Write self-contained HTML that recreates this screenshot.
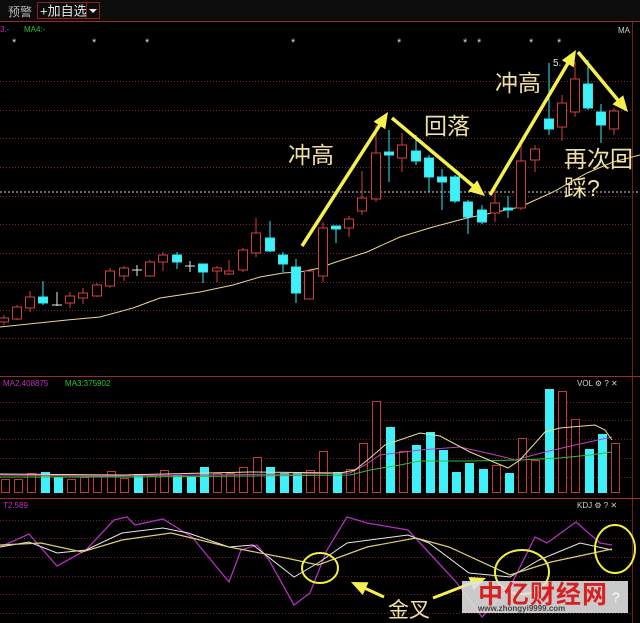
<!DOCTYPE html>
<html><head><meta charset="utf-8"><style>
html,body{margin:0;padding:0;background:#000;width:640px;height:623px;overflow:hidden}
svg{display:block}
.t{font-family:"Liberation Sans","Noto Sans CJK SC",sans-serif}
</style></head><body>
<svg width="640" height="623" viewBox="0 0 640 623" xmlns="http://www.w3.org/2000/svg">
<rect width="640" height="623" fill="#000"/>
<rect x="0" y="0" width="640" height="21" fill="#0c0c0c"/>
<text x="8" y="16" class="t" font-size="12" fill="#b8b8b8">预警</text>
<rect x="37.5" y="2.5" width="49" height="16" fill="none" stroke="#8a2020"/>
<text x="40" y="15.5" class="t" font-size="13" fill="#e8e8e8">+加自选</text>
<rect x="86.5" y="2.5" width="13" height="16" fill="none" stroke="#8a2020"/>
<polygon points="89,9 97,9 93,13" fill="#e8e8e8"/>
<line x1="0" y1="21.5" x2="640" y2="21.5" stroke="#9a2a2a"/>
<text x="0" y="32" class="t" font-size="8" fill="#c030c0">3:-</text>
<text x="24" y="32" class="t" font-size="8" fill="#30c030">MA4:-</text>
<text x="618" y="33" class="t" font-size="8" fill="#d0d0d0">MA</text>
<g class="t" font-size="11" fill="#d8d8d8">
<text x="12" y="46">*</text><text x="92" y="46">*</text><text x="145" y="46">*</text><text x="291" y="46">*</text><text x="397" y="46">*</text><text x="463" y="46">*</text><text x="477" y="46">*</text><text x="529" y="46">*</text><text x="557" y="46">*</text>
</g>
<g stroke="#7a2a2a" stroke-dasharray="1,2">
<line x1="0" y1="81.5" x2="632" y2="81.5"/><line x1="0" y1="110.5" x2="632" y2="110.5"/><line x1="0" y1="138.5" x2="632" y2="138.5"/><line x1="0" y1="167.5" x2="632" y2="167.5"/><line x1="0" y1="196.5" x2="632" y2="196.5"/><line x1="0" y1="224.5" x2="632" y2="224.5"/><line x1="0" y1="253.5" x2="632" y2="253.5"/><line x1="0" y1="282.5" x2="632" y2="282.5"/><line x1="0" y1="310.5" x2="632" y2="310.5"/><line x1="0" y1="338.5" x2="632" y2="338.5"/>
</g>
<line x1="0" y1="192" x2="640" y2="192" stroke="#d8d8d8" stroke-dasharray="2,2"/>
<line x1="632.5" y1="22" x2="632.5" y2="623" stroke="#7a2020"/>
<polyline fill="none" stroke="#e8d890" stroke-width="1" points="0,327 67,320 100,317 133,308 160,298 200,292 233,285 260,277 283,273 300,272 320,268 333,263 367,252 400,237 433,227 467,218 487,214 520,207 553,192 587,173 613,162 640,155"/>
<g stroke-width="1">
<g stroke="#d04040" fill="#000">
<line x1="4" y1="315" x2="4" y2="325"/><rect x="-0.5" y="318" width="9" height="4"/>
<line x1="17" y1="305" x2="17" y2="320"/><rect x="12.5" y="307" width="9" height="12"/>
<line x1="30" y1="291" x2="30" y2="312"/><rect x="25.5" y="297" width="9" height="11"/>
<line x1="70" y1="292" x2="70" y2="308"/><rect x="65.5" y="296" width="9" height="7"/>
<line x1="83" y1="288" x2="83" y2="304"/><rect x="78.5" y="293" width="9" height="5"/>
<line x1="97" y1="283" x2="97" y2="297"/><rect x="92.5" y="285" width="9" height="11"/>
<line x1="110" y1="268" x2="110" y2="288"/><rect x="105.5" y="271" width="9" height="15"/>
<line x1="124" y1="266" x2="124" y2="281"/><rect x="119.5" y="268" width="9" height="8"/>
<line x1="150" y1="260" x2="150" y2="277"/><rect x="145.5" y="262" width="9" height="14"/>
<line x1="163" y1="252" x2="163" y2="271"/><rect x="158.5" y="255" width="9" height="7"/>
<line x1="217" y1="266" x2="217" y2="282"/><rect x="212.5" y="268" width="9" height="3"/>
<line x1="229" y1="260" x2="229" y2="275"/><rect x="224.5" y="271" width="9" height="3"/>
<line x1="243" y1="248" x2="243" y2="272"/><rect x="238.5" y="250" width="9" height="20"/>
<line x1="256" y1="218" x2="256" y2="257"/><rect x="251.5" y="233" width="9" height="20"/>
<rect x="304.5" y="271" width="9" height="28"/>
<line x1="323" y1="222" x2="323" y2="282"/><rect x="318.5" y="228" width="9" height="48"/>
<line x1="349" y1="216" x2="349" y2="237"/><rect x="344.5" y="219" width="9" height="9"/>
<line x1="362" y1="171" x2="362" y2="215"/><rect x="357.5" y="198" width="9" height="13"/>
<line x1="376" y1="125" x2="376" y2="202"/><rect x="371.5" y="153" width="9" height="46"/>
<line x1="402" y1="133" x2="402" y2="172"/><rect x="397.5" y="145" width="9" height="13"/>
<line x1="495" y1="186" x2="495" y2="222"/><rect x="490.5" y="203" width="9" height="10"/>
<line x1="521" y1="140" x2="521" y2="210"/><rect x="516.5" y="161" width="9" height="47"/>
<line x1="535" y1="145" x2="535" y2="172"/><rect x="530.5" y="149" width="9" height="11"/>
<line x1="562" y1="95" x2="562" y2="141"/><rect x="557.5" y="103" width="9" height="24"/>
<line x1="575" y1="62" x2="575" y2="117"/><rect x="570.5" y="79" width="9" height="33"/>
<line x1="614" y1="108" x2="614" y2="135"/><rect x="609.5" y="111" width="9" height="18"/>
</g>
<g stroke="#30e8f0" fill="#40f0f8">
<line x1="43" y1="281" x2="43" y2="305"/><rect x="38.5" y="297" width="9" height="6"/>
<line x1="177" y1="252" x2="177" y2="269"/><rect x="172.5" y="255" width="9" height="7"/>
<line x1="203" y1="264" x2="203" y2="283"/><rect x="198.5" y="264" width="9" height="8"/>
<line x1="270" y1="221" x2="270" y2="252"/><rect x="265.5" y="238" width="9" height="13"/>
<line x1="283" y1="252" x2="283" y2="272"/><rect x="278.5" y="255" width="9" height="9"/>
<line x1="296" y1="259" x2="296" y2="303"/><rect x="291.5" y="267" width="9" height="26"/>
<line x1="336" y1="226" x2="336" y2="243"/><rect x="331.5" y="226" width="9" height="3"/>
<line x1="389" y1="130" x2="389" y2="182"/><rect x="384.5" y="152" width="9" height="3"/>
<line x1="416" y1="135" x2="416" y2="165"/><rect x="411.5" y="151" width="9" height="10"/>
<line x1="429" y1="155" x2="429" y2="192"/><rect x="424.5" y="158" width="9" height="19"/>
<line x1="442" y1="169" x2="442" y2="210"/><rect x="437.5" y="177" width="9" height="5"/>
<line x1="455" y1="175" x2="455" y2="203"/><rect x="450.5" y="177" width="9" height="24"/>
<line x1="468" y1="200" x2="468" y2="234"/><rect x="463.5" y="202" width="9" height="15"/>
<line x1="482" y1="205" x2="482" y2="224"/><rect x="477.5" y="210" width="9" height="12"/>
<line x1="508" y1="196" x2="508" y2="218"/><rect x="503.5" y="208" width="9" height="2"/>
<line x1="549" y1="63" x2="549" y2="135"/><rect x="544.5" y="119" width="9" height="10"/>
<line x1="588" y1="60" x2="588" y2="110"/><rect x="583.5" y="84" width="9" height="24"/>
<line x1="601" y1="104" x2="601" y2="143"/><rect x="596.5" y="112" width="9" height="13"/>
</g>
<g stroke="#e8e8e8">
<line x1="57" y1="292" x2="57" y2="306"/><line x1="52" y1="305" x2="62" y2="305"/>
<line x1="137" y1="265" x2="137" y2="276"/><line x1="132" y1="270" x2="142" y2="270"/>
<line x1="190" y1="261" x2="190" y2="272"/><line x1="185" y1="266" x2="195" y2="266"/>
</g>
</g>
<g stroke="#f4f050" stroke-width="3.5" fill="#f4f050">
<line x1="302" y1="246" x2="383" y2="120"/><polygon points="388,112 385.3,129.2 373.5,121.6" stroke="none"/>
<line x1="392" y1="118" x2="478" y2="190"/><polygon points="485,196 468.2,191.2 477.2,180.4" stroke="none"/>
<line x1="490" y1="195" x2="571" y2="58"/><polygon points="576,50 573.8,67.4 561.8,60.2" stroke="none"/>
<line x1="578" y1="52" x2="622" y2="105"/><polygon points="628,112 612.4,104.2 623.2,95.2" stroke="none"/>
</g>
<text x="553" y="66" class="t" font-size="10" fill="#e0e0e0">5.</text>
<g class="t" font-size="23" fill="#f0e0a0">
<text x="288" y="163">冲高</text>
<text x="424" y="134">回落</text>
<text x="495" y="91">冲高</text>
<text x="564" y="167">再次回</text>
<text x="564" y="196">踩?</text>
</g>
<line x1="0" y1="376.5" x2="640" y2="376.5" stroke="#a02a2a"/>
<text x="3" y="386" class="t" font-size="8" fill="#c030c0">MA2.408875</text>
<text x="65" y="386" class="t" font-size="8" fill="#30c030">MA3:375902</text>
<text x="577" y="386" class="t" font-size="8" fill="#d0d0d0">VOL ⚙ ? ✕</text>
<g stroke="#6a2424" stroke-dasharray="1,2">
<line x1="0" y1="402.5" x2="632" y2="402.5"/><line x1="0" y1="420.5" x2="632" y2="420.5"/><line x1="0" y1="439.5" x2="632" y2="439.5"/><line x1="0" y1="458.5" x2="632" y2="458.5"/><line x1="0" y1="477.5" x2="632" y2="477.5"/>
</g>
<g stroke="#c83838" fill="#000">
<rect x="1.5" y="479.5" width="8" height="13"/><rect x="14.5" y="479.5" width="8" height="13"/><rect x="27.5" y="473.5" width="8" height="19"/><rect x="67.5" y="479.5" width="8" height="13"/><rect x="80.5" y="477.5" width="8" height="15"/><rect x="93.5" y="476.5" width="8" height="16"/><rect x="107.5" y="471.5" width="8" height="21"/><rect x="120.5" y="478.5" width="8" height="14"/><rect x="147.5" y="476.5" width="8" height="16"/><rect x="160.5" y="470.5" width="8" height="22"/><rect x="213.5" y="473.5" width="8" height="19"/><rect x="226.5" y="473.5" width="8" height="19"/><rect x="239.5" y="467.5" width="8" height="25"/><rect x="253.5" y="457.5" width="8" height="35"/><rect x="306.5" y="470.5" width="8" height="22"/><rect x="319.5" y="451.5" width="8" height="41"/><rect x="346.5" y="469.5" width="8" height="23"/><rect x="359.5" y="443.5" width="8" height="49"/><rect x="372.5" y="401.5" width="8" height="91"/><rect x="399.5" y="451.5" width="8" height="41"/><rect x="492.5" y="465.5" width="8" height="27"/><rect x="518.5" y="438.5" width="8" height="54"/><rect x="531.5" y="460.5" width="8" height="32"/><rect x="558.5" y="391.5" width="8" height="101"/><rect x="571.5" y="419.5" width="8" height="73"/><rect x="611.5" y="443.5" width="8" height="49"/>
</g>
<g fill="#40f0f8">
<rect x="41" y="472" width="9" height="21"/><rect x="54" y="477" width="9" height="16"/><rect x="134" y="474" width="9" height="19"/><rect x="173" y="475" width="9" height="18"/><rect x="187" y="477" width="9" height="16"/><rect x="200" y="467" width="9" height="26"/><rect x="266" y="467" width="9" height="26"/><rect x="280" y="473" width="9" height="20"/><rect x="293" y="473" width="9" height="20"/><rect x="333" y="472" width="9" height="21"/><rect x="386" y="427" width="9" height="66"/><rect x="412" y="445" width="9" height="48"/><rect x="426" y="432" width="9" height="61"/><rect x="439" y="450" width="9" height="43"/><rect x="452" y="472" width="9" height="21"/><rect x="465" y="463" width="9" height="30"/><rect x="479" y="469" width="9" height="24"/><rect x="505" y="473" width="9" height="20"/><rect x="545" y="389" width="9" height="104"/><rect x="598" y="434" width="9" height="59"/><rect x="585" y="449" width="9" height="44"/>
</g>
<polyline fill="none" stroke="#c040c0" points="0,475 100,476 200,475 300,474 350,473 365,465 380,455 420,450 460,447 500,456 515,460 545,452 575,445 612,437"/>
<polyline fill="none" stroke="#30c030" points="0,477 120,477 250,476 350,475 370,470 400,465 420,461 470,461 520,460 560,458 590,455 612,452"/>
<polyline fill="none" stroke="#e8e090" points="0,474 120,475 250,472 340,473 355,470 370,458 385,445 420,433 440,436 470,452 508,468 520,460 545,432 560,428 595,425 605,430 612,440"/>
<line x1="0" y1="498.5" x2="640" y2="498.5" stroke="#a02a2a"/>
<text x="3" y="508" class="t" font-size="8" fill="#c030c0">T2.589</text>
<text x="577" y="508" class="t" font-size="8" fill="#d0d0d0">KDJ ⚙ ? ✕</text>
<g stroke="#6a2424" stroke-dasharray="1,2">
<line x1="0" y1="520.5" x2="632" y2="520.5"/><line x1="0" y1="538.5" x2="632" y2="538.5"/><line x1="0" y1="557.5" x2="632" y2="557.5"/><line x1="0" y1="576.5" x2="632" y2="576.5"/><line x1="0" y1="594.5" x2="632" y2="594.5"/><line x1="0" y1="613.5" x2="632" y2="613.5"/>
</g>
<polyline fill="none" stroke="#b030c0" stroke-width="1.3" points="0,547 29,534 57,566 86,550 114,520 127,517 135,525 163,519 192,537 229,582 241,550 257,545 269,560 294,605 310,593 327,550 347,517 367,523 408,530 433,557 457,583 482,617 510,587 535,537 547,543 576,522 600,543 612,545"/>
<polyline fill="none" stroke="#e8e8e8" points="0,547 29,542 57,553 86,550 122,533 163,528 188,533 229,547 253,545 294,577 318,563 347,543 408,535 429,543 469,573 510,577 539,560 580,543 612,550"/>
<polyline fill="none" stroke="#d8d070" stroke-width="1.2" points="0,545 41,543 82,552 122,540 171,533 229,547 286,558 318,565 367,547 416,538 449,547 510,575 551,562 612,549"/>
<g fill="none" stroke="#f0f040" stroke-width="2">
<ellipse cx="320" cy="568" rx="18" ry="15"/>
<ellipse cx="522" cy="572" rx="27" ry="22"/>
<ellipse cx="615" cy="549" rx="20" ry="24"/>
</g>
<g stroke="#f4f050" stroke-width="3" fill="#f4f050">
<line x1="384" y1="597" x2="360" y2="586"/><polygon points="351,582 368.5,582.2 362.7,595" stroke="none"/>
<line x1="433" y1="598" x2="477" y2="581"/><polygon points="486,578 473.5,590.2 468.5,577" stroke="none"/>
</g>
<rect x="462" y="581" width="166" height="32" fill="#e0e0e0" opacity="0.9"/>
<text x="478" y="603" class="t" font-size="25" font-weight="bold" fill="#d82020" letter-spacing="1">中亿财经网</text>
<text x="478" y="611" class="t" font-size="8" font-weight="bold" fill="#444">www.zhongyi9999.com</text>
<text x="612" y="602" class="t" font-size="14" fill="#fff">?</text>
<text x="388" y="617" class="t" font-size="21" fill="#f0e0a0">金叉</text>
</svg>
</body></html>
